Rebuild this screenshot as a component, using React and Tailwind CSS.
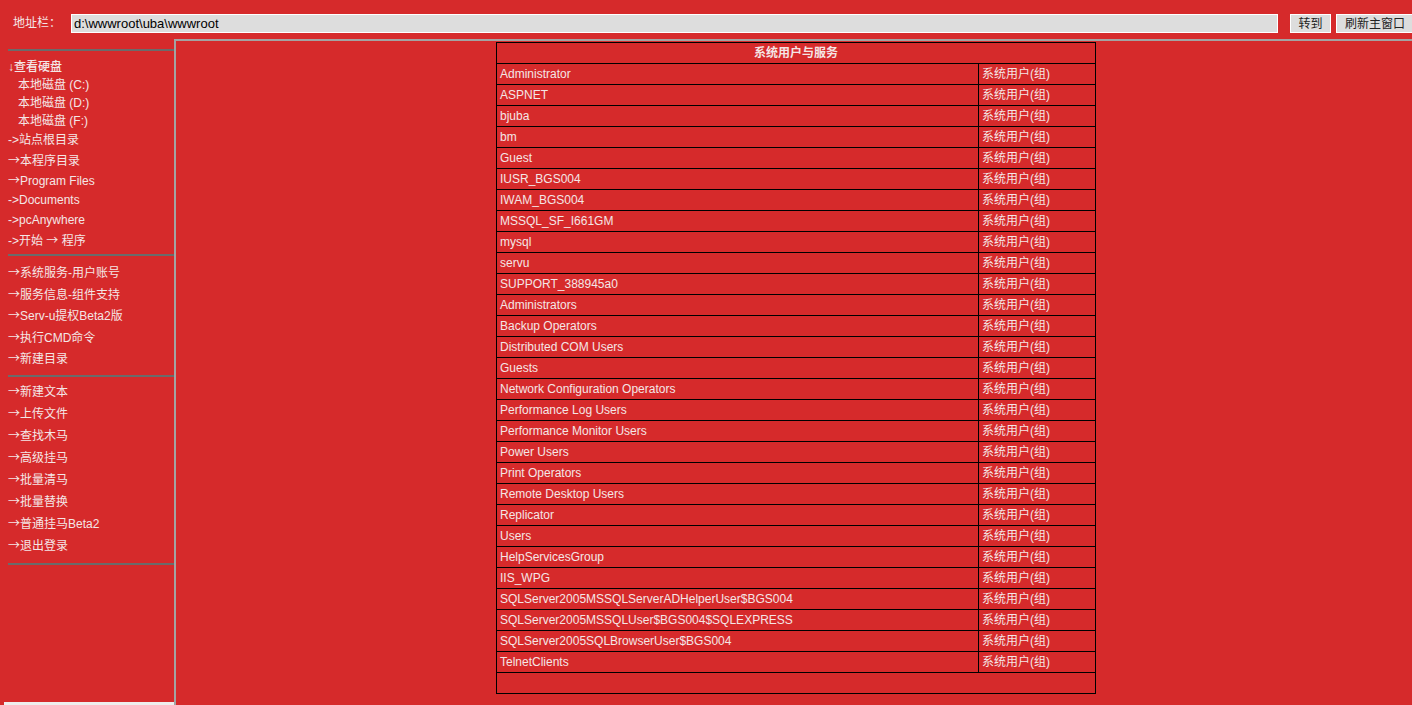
import React from "react";

const users = [
  "Administrator",
  "ASPNET",
  "bjuba",
  "bm",
  "Guest",
  "IUSR_BGS004",
  "IWAM_BGS004",
  "MSSQL_SF_I661GM",
  "mysql",
  "servu",
  "SUPPORT_388945a0",
  "Administrators",
  "Backup Operators",
  "Distributed COM Users",
  "Guests",
  "Network Configuration Operators",
  "Performance Log Users",
  "Performance Monitor Users",
  "Power Users",
  "Print Operators",
  "Remote Desktop Users",
  "Replicator",
  "Users",
  "HelpServicesGroup",
  "IIS_WPG",
  "SQLServer2005MSSQLServerADHelperUser$BGS004",
  "SQLServer2005MSSQLUser$BGS004$SQLEXPRESS",
  "SQLServer2005SQLBrowserUser$BGS004",
  "TelnetClients",
];

// arrow glyphs come from the CJK font so they render wide
const Arrow = ({ children }) => (
  <span style={{ fontFamily: '"Noto Sans CJK SC", sans-serif' }}>{children}</span>
);

const drives = ["本地磁盘 (C:)", "本地磁盘 (D:)", "本地磁盘 (F:)"];

const group1 = [
  <>-&gt;站点根目录</>,
  <><Arrow>→</Arrow>本程序目录</>,
  <><Arrow>→</Arrow>Program Files</>,
  <>-&gt;Documents</>,
  <>-&gt;pcAnywhere</>,
  <>-&gt;开始 <Arrow>→</Arrow> 程序</>,
];

const group2 = [
  "系统服务-用户账号",
  "服务信息-组件支持",
  "Serv-u提权Beta2版",
  "执行CMD命令",
  "新建目录",
];

const group3 = [
  "新建文本",
  "上传文件",
  "查找木马",
  "高级挂马",
  "批量清马",
  "批量替换",
  "普通挂马Beta2",
  "退出登录",
];

const Rule = () => <div className="ml-2 h-[2px] shrink-0 bg-[#6b6b6b]" />;

const SideBar = () => (
  <aside className="w-[174px] shrink-0 pt-[10px] flex flex-col text-[12px] text-[#f4e6e6]">
    <Rule />
    <div className="pl-2 pt-[7px] pb-[4px]">
      <div className="leading-[18px] h-[18px] font-medium">↓查看硬盘</div>
      <div className="pl-[10px]">
        {drives.map((d) => (
          <div key={d} className="leading-[18px] h-[18px]">
            {d}
          </div>
        ))}
      </div>
      {group1.map((t, i) => (
        <div key={i} className="leading-[20px] h-[20px] whitespace-nowrap">
          {t}
        </div>
      ))}
    </div>
    <Rule />
    <div className="pl-2 pt-[5px] pb-[6px]">
      {group2.map((t) => (
        <div key={t} className="leading-[21.5px] h-[21.5px] whitespace-nowrap">
          <Arrow>→</Arrow>
          {t}
        </div>
      ))}
    </div>
    <Rule />
    <div className="pl-2 pt-[3px] pb-[7px]">
      {group3.map((t) => (
        <div key={t} className="leading-[22px] h-[22px] whitespace-nowrap">
          <Arrow>→</Arrow>
          {t}
        </div>
      ))}
    </div>
    <Rule />
    <div className="flex-1" />
    <div className="ml-1 h-[3px] bg-[#eeeeee]" />
  </aside>
);

export default function App() {
  return (
    <div
      className="w-[1412px] h-[705px] overflow-hidden bg-[#d62a2b] flex flex-col"
      style={{ fontFamily: '"Liberation Sans", "Noto Sans CJK SC", sans-serif' }}
    >
      <header className="h-[39px] shrink-0 flex items-start pt-[14px] text-[12px] overflow-hidden">
        <span className="w-[71px] shrink-0 pl-[13px] leading-[19px] text-[#f4e6e6]">地址栏：</span>
        <input
          readOnly
          value="d:\wwwroot\uba\wwwroot"
          className="w-[1207px] shrink-0 h-[19px] bg-[#dddddd] border border-white px-[2px] text-[13px] text-black outline-none"
        />
        <button className="ml-[12px] shrink-0 w-[41px] h-[19px] bg-[#dddddd] border border-white text-[12px] text-[#222] leading-none">
          转到
        </button>
        <button className="ml-[5px] shrink-0 w-[84px] h-[19px] bg-[#dddddd] border border-white text-[12px] text-[#222] leading-none text-left pl-[8px]">
          刷新主窗口
        </button>
      </header>

      <div className="flex flex-1 min-h-0">
        <SideBar />
        <main className="flex-1 border-t-2 border-l-2 border-[#a3a3a3] pt-[1px] flex justify-center">
          <table className="w-[600px] border-collapse border border-black text-[12px] text-[#f4e6e6] ml-[4px] self-start">
            <thead>
              <tr className="h-[21px]">
                <th colSpan={2} className="border border-black font-semibold text-center">
                  系统用户与服务
                </th>
              </tr>
            </thead>
            <tbody>
              {users.map((u) => (
                <tr key={u} className="h-[21px]">
                  <td className="border border-black pl-[3px] w-[482px]">{u}</td>
                  <td className="border border-black pl-[3px]">系统用户(组)</td>
                </tr>
              ))}
              <tr className="h-[21px]">
                <td colSpan={2} className="border border-black" />
              </tr>
            </tbody>
          </table>
        </main>
      </div>
    </div>
  );
}
